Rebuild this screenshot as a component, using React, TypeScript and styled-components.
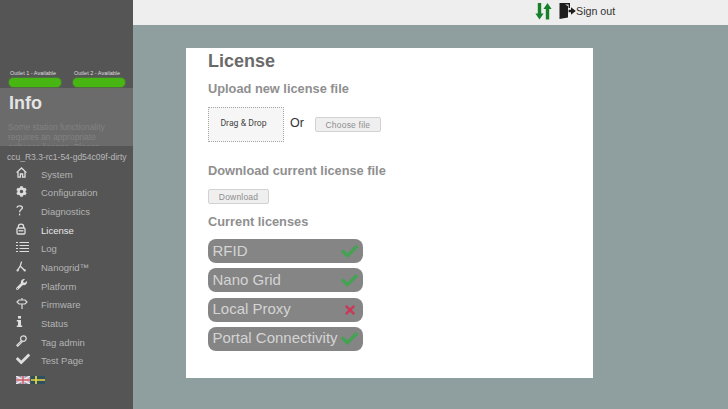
import React from 'react'
import styled, { createGlobalStyle } from 'styled-components'
import { FaCog, FaWrench, FaCheck, FaTimes } from 'react-icons/fa'

const GlobalStyle = createGlobalStyle`
  html, body {
    margin: 0;
    padding: 0;
    height: 100%;
    overflow: hidden;
    background: #8f9e9e;
    font-family: "Liberation Sans", Arial, sans-serif;
  }
`

const Page = styled.div`
  display: flex;
  width: 728px;
  height: 409px;
  overflow: hidden;
`

const Sidebar = styled.aside`
  width: 133px;
  flex: none;
  background: #555;
  padding-top: 69px;
  box-sizing: border-box;
`

const Outlets = styled.div`
  display: flex;
  gap: 12px;
  padding: 0 0 0 9px;
  height: 19px;
`

const Outlet = styled.div`
  width: 52px;
  padding-left: 1px;
  box-sizing: border-box;
  font-size: 5.5px;
  line-height: 8px;
  color: #ddd;
  white-space: nowrap;
`

const OutletBar = styled.div`
  height: 9px;
  margin: 1px 0 0 -1px;
  border-radius: 5px;
  background: #48b612;
  box-shadow: 0 0 2px #48b612;
`

const InfoPanel = styled.div`
  height: 58px;
  overflow: hidden;
  background: #6b6b6b;
  padding: 5px 8px 0 8px;
  box-sizing: border-box;
`

const InfoTitle = styled.div`
  margin-left: 1px;
  font-size: 18px;
  line-height: 21px;
  font-weight: bold;
  color: #e4e4e4;
`

const InfoText = styled.div`
  margin-top: 8px;
  font-size: 8.5px;
  line-height: 10px;
  color: #828282;
`

const Version = styled.div`
  padding-left: 7px;
  margin-top: 6px;
  font-size: 8.5px;
  line-height: 11px;
  color: #b8b8b8;
  white-space: nowrap;
`

const Nav = styled.nav`
  display: flex;
  flex-direction: column;
  margin-top: 2px;
`

const NavItem = styled.div<{ $active?: boolean }>`
  display: flex;
  align-items: center;
  height: 18.65px;
  padding-left: 16px;
  font-size: 9.5px;
  color: ${p => (p.$active ? '#e8e8e8' : '#b4b4b4')};
`

const NavIcon = styled.span`
  width: 25px;
  flex: none;
  display: flex;
  align-items: center;
  color: #dedede;
  font-size: 11px;
  svg {
    display: block;
    margin-top: -3px;
  }
`

const Flags = styled.div`
  display: flex;
  gap: 1px;
  padding: 6px 0 0 16px;
`

const Main = styled.main`
  flex: 1;
  display: flex;
  flex-direction: column;
`

const TopBar = styled.header`
  height: 25px;
  flex: none;
  display: flex;
  align-items: center;
  padding: 0 0 3px 402px;
  box-sizing: border-box;
  background: #eeeeee;
  font-size: 10.7px;
  color: #333;
`

const SignOut = styled.span`
  display: flex;
  align-items: center;
  margin-left: 7px;
`

const Card = styled.section`
  margin: 23px 0 0 53px;
  width: 407px;
  height: 330px;
  box-sizing: border-box;
  background: #fff;
  padding: 3px 0 0 22px;
`

const PageTitle = styled.h1`
  margin: 0;
  font-size: 18px;
  line-height: 21px;
  font-weight: bold;
  color: #6a6a6a;
`

const SectionTitle = styled.h2<{ $top: number }>`
  margin: ${p => p.$top}px 0 0;
  font-size: 12.8px;
  line-height: 16px;
  font-weight: bold;
  color: #8f8f8f;
`

const UploadRow = styled.div`
  display: flex;
  align-items: center;
  margin-top: 10px;
`

const DropZone = styled.div`
  width: 76px;
  height: 35px;
  box-sizing: border-box;
  display: flex;
  align-items: center;
  justify-content: center;
  padding: 0 5px 3px 0;
  background: #f6f6f6;
  border: 1px dotted #a8a8a8;
  font-family: Roboto, "Liberation Sans", sans-serif;
  font-size: 8.7px;
  color: #444;
`

const OrLabel = styled.span`
  margin: 0 11px 3px 6px;
  font-size: 12.5px;
  color: #333;
`

const GreyButton = styled.button<{ $width: number; $top?: number }>`
  display: block;
  width: ${p => p.$width}px;
  height: 15px;
  margin-top: ${p => p.$top ?? 0}px;
  padding: 0;
  box-sizing: border-box;
  background: #efefef;
  border: 1px solid #d2d2d2;
  border-radius: 2px;
  font-family: inherit;
  font-size: 8.5px;
  letter-spacing: 0.2px;
  color: #8e8e8e;
`

const Licenses = styled.div`
  display: flex;
  flex-direction: column;
  gap: 5.3px;
  margin-top: 9px;
`

const LicenseRow = styled.div`
  width: 155px;
  height: 24px;
  box-sizing: border-box;
  display: flex;
  align-items: center;
  justify-content: space-between;
  padding: 0 5px 2px 4.5px;
  background: #858585;
  border-radius: 8px;
  font-size: 15px;
  color: #d4d4d4;
  white-space: nowrap;
`

const Status = styled.span<{ $ok: boolean }>`
  display: flex;
  font-size: ${p => (p.$ok ? 17 : 14)}px;
  margin: 2px ${p => (p.$ok ? 0 : 1)}px 0 0;
  color: ${p => (p.$ok ? '#42a351' : '#c93a58')};
`

const HomeIcon = () => (
  <svg width="11" height="11" viewBox="0 0 11 11" fill="none" stroke="currentColor" strokeWidth="1.3">
    <path d="M0.6 5.6 L5.5 1 L10.4 5.6" />
    <path d="M2 4.6 V10.2 H4.4 V7 H6.6 V10.2 H9 V4.6" />
  </svg>
)

const QuestionIcon = () => (
  <svg width="8" height="11" viewBox="0 0 8 11" fill="none" stroke="currentColor" strokeWidth="1.3">
    <path d="M1 2.8 C1.2 0.4 6.4 0.2 6.4 2.8 C6.4 4.6 3.6 4.6 3.6 7.2" />
    <path d="M3.6 8.6 V10.4" />
  </svg>
)

const LockIcon = () => (
  <svg width="10" height="12" viewBox="0 0 10 12" fill="none" stroke="currentColor" strokeWidth="1.3">
    <path d="M2.4 5 V3.2 C2.4 0.3 7.6 0.3 7.6 3.2 V5" />
    <rect x="1" y="5" width="8" height="6" rx="1" />
    <path d="M2.6 7.8 H7.4" />
  </svg>
)

const ListIcon = () => (
  <svg width="13" height="12" viewBox="0 0 13 12" fill="none" stroke="currentColor" strokeWidth="1.1">
    <path d="M3.5 1.5 H13 M3.5 4.5 H13 M3.5 7.5 H13 M3.5 10.5 H13" />
    <path d="M0 1.5 H2 M0 4.5 H2 M0 7.5 H2 M0 10.5 H2" />
  </svg>
)

const NanogridIcon = () => (
  <svg width="11" height="11" viewBox="0 0 11 11" fill="none" stroke="currentColor" strokeWidth="1.3">
    <path d="M5.6 0.6 L4.2 5 L1.4 9.6 M4.2 5 L8.4 9.2" />
    <circle cx="1.6" cy="9.4" r="1.1" fill="currentColor" stroke="none" />
    <circle cx="8.8" cy="9.4" r="1.1" fill="currentColor" stroke="none" />
  </svg>
)

const FirmwareIcon = () => (
  <svg width="12" height="11" viewBox="0 0 12 11" fill="none" stroke="currentColor" strokeWidth="1.2">
    <path d="M6 0 V2 M6 6 V11" />
    <path d="M3 2 H9 L11 4 L9 6 H3 L1 4 Z" />
  </svg>
)

const InfoIcon = () => (
  <svg width="7" height="11" viewBox="0 0 7 11" fill="currentColor">
    <rect x="2" y="0" width="3" height="2.6" />
    <path d="M0.8 4 H5 V9.6 H6.2 V11 H0.8 V9.6 H2 V5.4 H0.8 Z" />
  </svg>
)

const KeyIcon = () => (
  <svg width="11" height="12" viewBox="0 0 11 12" fill="none" stroke="currentColor" strokeWidth="1.2">
    <circle cx="7.4" cy="3.6" r="2.8" />
    <path d="M5.4 5.6 L0.8 10.2 L1.8 11.2 L6.4 6.6" />
  </svg>
)

const UkFlag = () => (
  <svg width="14" height="8" viewBox="0 0 14 8">
    <rect width="14" height="8" fill="#8e93ad" />
    <path d="M0 0 L14 8 M14 0 L0 8" stroke="#f2e6e6" strokeWidth="1.6" />
    <path d="M7 0 V8 M0 4 H14" stroke="#f2e6e6" strokeWidth="2.8" />
    <path d="M7 0 V8 M0 4 H14" stroke="#c9576a" strokeWidth="1.5" />
  </svg>
)

const SeFlag = () => (
  <svg width="14" height="8" viewBox="0 0 14 8">
    <rect width="14" height="8" fill="#2d4f60" />
    <path d="M5 0 V8 M0 4 H14" stroke="#e6d83c" strokeWidth="1.7" />
  </svg>
)

const TransferIcon = () => (
  <svg width="17" height="17" viewBox="0 0 17 17" fill="#15812c">
    <path d="M2.8 0 H6.2 V10.5 H8.6 L4.5 16.5 L0.4 10.5 H2.8 Z" />
    <path d="M10.8 16.5 H14.2 V6 H16.6 L12.5 0 L8.4 6 H10.8 Z" />
  </svg>
)

const DoorIcon = () => (
  <svg width="17" height="18" viewBox="0 0 17 18" fill="#1c1c1c">
    <path d="M0.5 1 H11 V6 H9.6 V2.4 H6 L9 4 V15.6 L0.5 17 Z" />
    <path d="M9.6 7.8 H12 V5.2 L16.8 9 L12 12.8 V10.2 H9.6 Z" />
  </svg>
)

const navItems = [
  { label: 'System', icon: <HomeIcon /> },
  { label: 'Configuration', icon: <FaCog /> },
  { label: 'Diagnostics', icon: <QuestionIcon /> },
  { label: 'License', icon: <LockIcon />, active: true },
  { label: 'Log', icon: <ListIcon /> },
  { label: 'Nanogrid™', icon: <NanogridIcon /> },
  { label: 'Platform', icon: <FaWrench /> },
  { label: 'Firmware', icon: <FirmwareIcon /> },
  { label: 'Status', icon: <InfoIcon /> },
  { label: 'Tag admin', icon: <KeyIcon /> },
  { label: 'Test Page', icon: <FaCheck size={14} /> },
]

const licenses = [
  { name: 'RFID', ok: true },
  { name: 'Nano Grid', ok: true },
  { name: 'Local Proxy', ok: false },
  { name: 'Portal Connectivity', ok: true },
]

export default function App() {
  return (
    <Page>
      <GlobalStyle />
      <Sidebar>
        <Outlets>
          <Outlet>Outlet 1 - Available<OutletBar /></Outlet>
          <Outlet>Outlet 2 - Available<OutletBar /></Outlet>
        </Outlets>
        <InfoPanel>
          <InfoTitle>Info</InfoTitle>
          <InfoText>Some station functionality requires an appropriate software license. Please</InfoText>
        </InfoPanel>
        <Version>ccu_R3.3-rc1-54-gd54c09f-dirty</Version>
        <Nav>
          {navItems.map(item => (
            <NavItem key={item.label} $active={item.active}>
              <NavIcon>{item.icon}</NavIcon>
              {item.label}
            </NavItem>
          ))}
        </Nav>
        <Flags>
          <UkFlag />
          <SeFlag />
        </Flags>
      </Sidebar>
      <Main>
        <TopBar>
          <TransferIcon />
          <SignOut><DoorIcon />Sign out</SignOut>
        </TopBar>
        <Card>
          <PageTitle>License</PageTitle>
          <SectionTitle $top={9}>Upload new license file</SectionTitle>
          <UploadRow>
            <DropZone>Drag &amp; Drop</DropZone>
            <OrLabel>Or</OrLabel>
            <GreyButton $width={66}>Choose file</GreyButton>
          </UploadRow>
          <SectionTitle $top={21}>Download current license file</SectionTitle>
          <GreyButton $width={61} $top={10}>Download</GreyButton>
          <SectionTitle $top={10}>Current licenses</SectionTitle>
          <Licenses>
            {licenses.map(l => (
              <LicenseRow key={l.name}>
                {l.name}
                <Status $ok={l.ok}>{l.ok ? <FaCheck /> : <FaTimes />}</Status>
              </LicenseRow>
            ))}
          </Licenses>
        </Card>
      </Main>
    </Page>
  )
}
